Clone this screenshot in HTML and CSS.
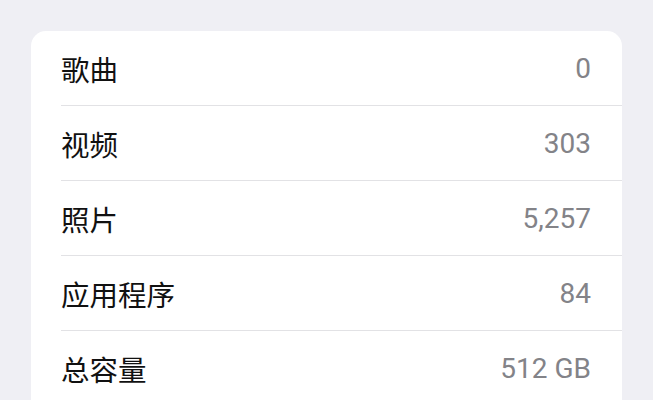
FILE: index.html
```html
<!DOCTYPE html>
<html lang="zh-CN">
<head>
<meta charset="utf-8">
<title>存储</title>
<link rel="stylesheet" href="styles.css">
</head>
<body>
<div class="card">
  <div class="row"><span class="label">歌曲</span><span class="value">0</span></div>
  <div class="row"><span class="label">视频</span><span class="value">303</span></div>
  <div class="row"><span class="label">照片</span><span class="value">5,257</span></div>
  <div class="row"><span class="label">应用程序</span><span class="value">84</span></div>
  <div class="row"><span class="label">总容量</span><span class="value">512 GB</span></div>
</div>
</body>
</html>
```
FILE: styles.css
```css
html, body {
  margin: 0;
  padding: 0;
  background: #efeff4;
  height: 100%;
  overflow: hidden;
}
body {
  padding: 31px 31px 0 31px;
  font-family: Roboto, "Noto Sans CJK SC", sans-serif;
}
.card {
  background: #ffffff;
  border-radius: 15px;
  padding-left: 30px;
  padding-bottom: 40px;
}
.row {
  height: 74px;
  display: flex;
  align-items: center;
  justify-content: space-between;
  padding-right: 31px;
  border-bottom: 1px solid #e2e2e5;
}
.label {
  font-family: "Noto Sans CJK SC", sans-serif;
  font-size: 28.5px;
  color: #111111;
}
.value {
  font-size: 28px;
  color: #838388;
}
```
